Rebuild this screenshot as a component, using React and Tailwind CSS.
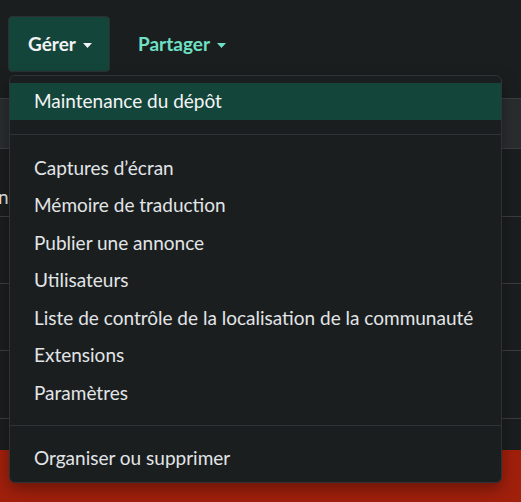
import React from "react";

const Caret = ({ color }) => (
  <svg width="9" height="5" viewBox="0 0 9 5" className="ml-[7px] mt-[2px]">
    <path d="M0 0 L9 0 L4.5 5 Z" fill={color} />
  </svg>
);

const items = [
  "Captures d’écran",
  "Mémoire de traduction",
  "Publier une annonce",
  "Utilisateurs",
  "Liste de contrôle de la localisation de la communauté",
  "Extensions",
  "Paramètres",
];

export default function App() {
  return (
    <div
      className="relative w-[521px] h-[502px] overflow-hidden bg-[#1b1e1f]"
      style={{ fontFamily: "Lato, 'Noto Sans', sans-serif" }}
    >
      {/* top nav */}
      <div className="h-[98px] flex items-start pt-4 pl-2">
        <button className="h-[56px] w-[102px] flex items-center pl-[19px] rounded-[4px] border border-[#2c3032] bg-[#14453a] text-[19px] font-bold text-[#f1f3f4]">
          Gérer
          <Caret color="#f1f3f4" />
        </button>
        <div className="h-[56px] flex items-center ml-[28px] text-[19px] font-bold text-[#6ee0c4]">
          Partager
          <Caret color="#6ee0c4" />
        </div>
      </div>

      {/* background table */}
      <div className="h-[51px] bg-[#2a2d2f] border-y border-[#3b3e40]" />
      <div className="h-[68px] border-b border-[#3b3e40] flex items-center text-[19px] text-[#e3e6e8]">
        <span className="-ml-[2px] pt-[30px]">n</span>
      </div>
      <div className="h-[67px] border-b border-[#3b3e40]" />
      <div className="h-[67px] border-b border-[#3b3e40]" />
      <div className="h-[68px] border-b border-[#3b3e40]" />
      <div className="h-[31px]" />
      <div className="h-[52px] bg-[#a1200c]" />

      {/* dropdown */}
      <div className="absolute left-[9px] top-[75px] w-[493px] h-[408px] rounded-[6px] border border-[#2f3335] bg-[#1b1e1f] shadow-[0_6px_16px_rgba(0,0,0,0.35)] pt-[7px] text-[19px] text-[#e2e5e7]">
        <div className="h-[37px] flex items-center pl-[24px] bg-[#14453a] text-[#f3f5f6]">
          Maintenance du dépôt
        </div>
        <div className="h-px bg-[#2f3335] my-[14px]" />
        {items.map((t) => (
          <div key={t} className="h-[37.5px] flex items-center pl-[24px] whitespace-nowrap">
            {t}
          </div>
        ))}
        <div className="h-px bg-[#2f3335] my-[13.5px]" />
        <div className="h-[37.5px] flex items-center pl-[24px]">Organiser ou supprimer</div>
      </div>
    </div>
  );
}
